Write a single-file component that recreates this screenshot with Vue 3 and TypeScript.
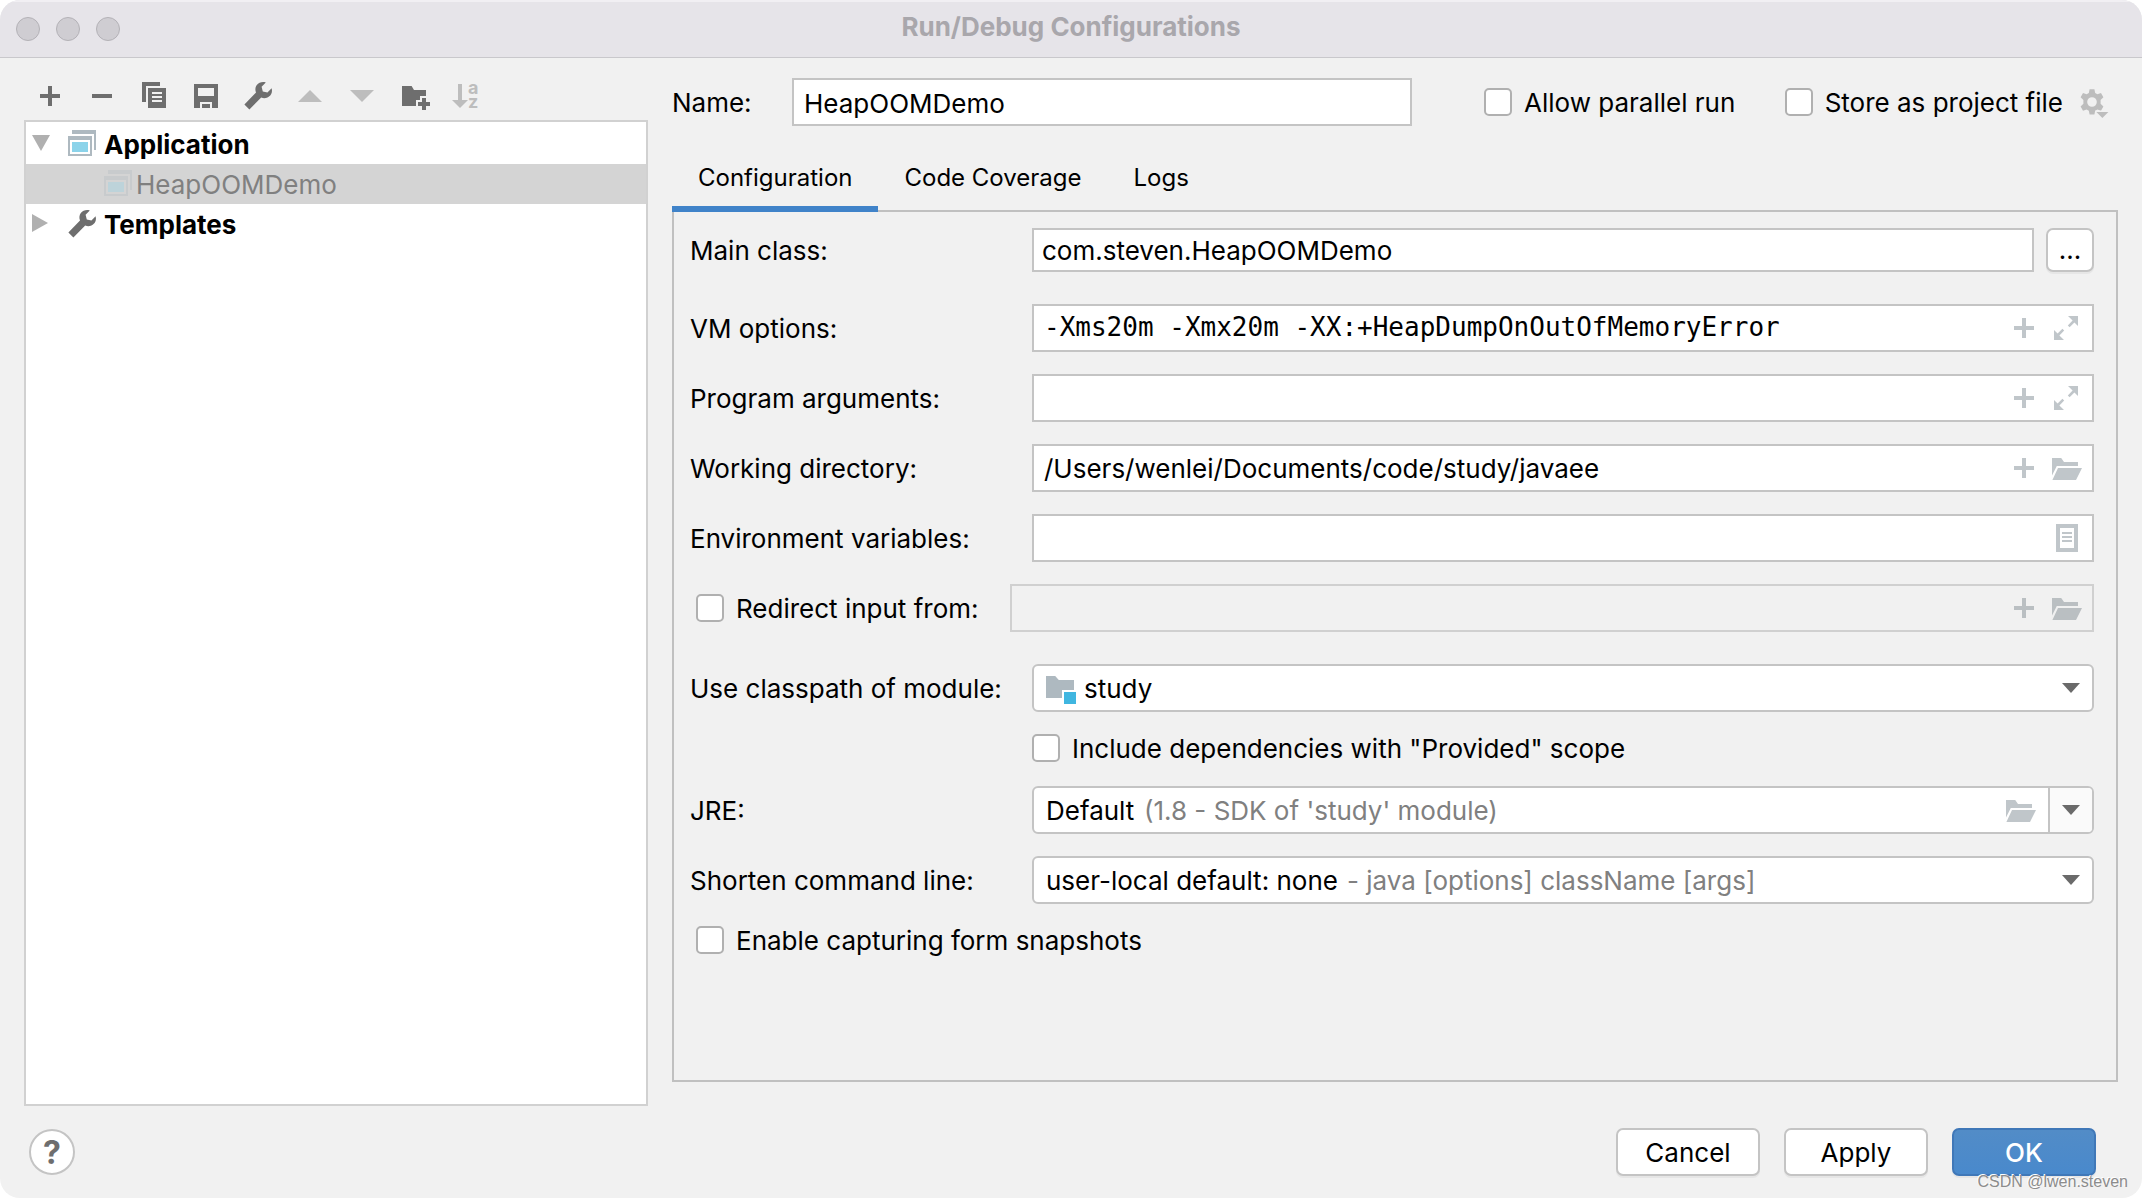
<script setup lang="ts">
import { reactive, ref } from 'vue'

interface Tool {
  name: string
  label: string
  disabled?: boolean
}

const tools: Tool[] = [
  { name: 'add', label: 'Add' },
  { name: 'remove', label: 'Remove' },
  { name: 'copy', label: 'Copy' },
  { name: 'save', label: 'Save' },
  { name: 'wrench', label: 'Edit templates' },
  { name: 'up', label: 'Move up', disabled: true },
  { name: 'down', label: 'Move down', disabled: true },
  { name: 'newFolder', label: 'Create folder' },
  { name: 'sort', label: 'Sort', disabled: true },
]

const icons: Record<string, string> = {
  add: 'M7 3h2v4h4v2H9v4H7V9H3V7h4z',
  remove: 'M3 7h10v2H3z',
  copy: 'M2 1h9v2H4v8H2zM5 4h9v10H5zM7 6v1h5V6zM7 8v1h5V8zM7 10v1h5v-1z',
  save: 'M2 2h12v12h-3v-3H5v3H2zM4 4v4h8V4zM6 12h4v2H6z',
  wrench:
    'M14.8 4.1 12.7 6.3 10.4 5.7 9.8 3.4 11.9 1.2C10.2.7 8.4 1.2 7.4 2.5 6.6 3.6 6.5 5 7 6.3L1.2 12.2l2.5 2.5 5.9-5.9c1.4.6 2.8.4 3.9-.5 1.3-1 1.8-2.6 1.3-4.2z',
  up: 'M2 11 8 5l6 6z',
  down: 'M2 5h12l-6 6z',
  newFolder: 'M2 3h4.8L8 5h6v3h-3v2H9v3H2zM12 9h2v2h2v2h-2v2h-2v-2h-2v-2h2z',
  sort: 'M4 2h2v8h3l-4 4-4-4h3z',
  expand: 'M9 2h5v5l-1.8-1.8-2.4 2.4-.9-.9 2.4-2.4zM2 9l1.800 1.800 2.400-2.400.9.9-2.400 2.400L7 14H2z',
  folder: 'M1 3h4.6L7 5h7v2H3.4L1 11.8zM4 8h12l-3 6H1.2z',
  list: 'M3 1h11v14H3zM5 3v10h7V3zM6 5h5v1H6zM6 7h5v1H6zM6 9h5v1H6z',
}

const tabs = ['Configuration', 'Code Coverage', 'Logs']
const activeTab = ref('Configuration')

const form = reactive({
  name: 'HeapOOMDemo',
  parallel: false,
  store: false,
  mainClass: 'com.steven.HeapOOMDemo',
  redirect: false,
  redirectFile: '',
  module: 'study',
  provided: false,
  jre: 'Default',
  shorten: 'user-local default: none',
  snapshots: false,
})

const fields = reactive([
  { id: 'vm', label: 'VM options:', value: '-Xms20m -Xmx20m -XX:+HeapDumpOnOutOfMemoryError', mono: true, icons: ['add', 'expand'] },
  { id: 'args', label: 'Program arguments:', value: '', mono: true, icons: ['add', 'expand'] },
  { id: 'cwd', label: 'Working directory:', value: '/Users/wenlei/Documents/code/study/javaee', mono: false, icons: ['add', 'folder'] },
  { id: 'env', label: 'Environment variables:', value: '', mono: false, icons: ['list'] },
])
</script>

<template>
  <div class="window">
    <header class="titlebar">
      <div class="lights"><i></i><i></i><i></i></div>
      <h1>Run/Debug Configurations</h1>
    </header>

    <main class="content">
      <aside class="side">
        <div class="toolbar">
          <button v-for="t in tools" :key="t.name" class="icon-btn" :aria-label="t.label" :disabled="t.disabled">
            <svg class="icon" viewBox="0 0 16 16">
              <path fill-rule="evenodd" :d="icons[t.name]" />
              <template v-if="t.name === 'sort'">
                <text x="9" y="7" class="sort-letter">a</text>
                <text x="9" y="14" class="sort-letter">z</text>
              </template>
            </svg>
          </button>
        </div>
        <ul class="tree">
          <li class="node">
            <svg class="twisty" viewBox="0 0 20 20"><path d="M0 1h18L9 17z" /></svg>
            <svg class="icon app" viewBox="0 0 16 16">
              <path fill-rule="evenodd" d="M3 1h12v10h-1V3H3zM1 4h12v10H1zM2 6v7h10V6z" />
              <path class="pane" d="M3 7h8v5H3z" />
            </svg>
            <b>Application</b>
          </li>
          <li class="node child selected">
            <svg class="icon app" viewBox="0 0 16 16">
              <path fill-rule="evenodd" d="M3 1h12v10h-1V3H3zM1 4h12v10H1zM2 6v7h10V6z" />
              <path class="pane" d="M3 7h8v5H3z" />
            </svg>
            <span>HeapOOMDemo</span>
          </li>
          <li class="node">
            <svg class="twisty" viewBox="0 0 20 20"><path d="M0 0l16 9-16 9z" /></svg>
            <svg class="icon" viewBox="0 0 16 16"><path :d="icons.wrench" /></svg>
            <b>Templates</b>
          </li>
        </ul>
      </aside>

      <section class="editor">
        <div class="name-row">
          <label for="name" class="name-label">Name:</label>
          <input id="name" v-model="form.name" class="box name-input" type="text" />
          <label class="check parallel"><input v-model="form.parallel" type="checkbox" /><span>Allow parallel run</span></label>
          <label class="check store"><input v-model="form.store" type="checkbox" /><span>Store as project file</span></label>
          <button class="icon-btn gear" aria-label="Storage settings" disabled>
            <svg class="icon" viewBox="0 0 16 16">
              <path
                fill-rule="evenodd"
                d="M5.8 1.6h2.4l.4 1.9 1.1.6 1.8-.6 1.2 2.1L11.3 7v1.9l1.4 1.4-1.2 2.1-1.8-.6-1.1.6-.4 1.9H5.800l-.4-1.900-1.100-.6-1.800.6-1.200-2.100L2.700 8.900V7L1.300 5.600l1.200-2.100 1.800.6 1.100-.6zM7 5.600a2.400 2.400 0 1 0 0 4.800 2.400 2.400 0 0 0 0-4.800z"
              />
              <path class="gear-gap" d="M8.400 12.400h7.600v4h-4.600z" />
              <path d="M9.200 13h6L12.200 16z" />
            </svg>
          </button>
        </div>

        <div class="tabs" role="tablist">
          <button
            v-for="t in tabs"
            :key="t"
            role="tab"
            class="tab"
            :class="{ active: t === activeTab }"
            :aria-selected="t === activeTab"
            @click="activeTab = t"
          >{{ t }}</button>
        </div>

        <form class="panel" @submit.prevent>
          <div class="row spaced">
            <label for="main" class="label">Main class:</label>
            <input id="main" v-model="form.mainClass" class="box main-class" type="text" />
            <button type="button" class="browse" aria-label="Browse main class">...</button>
          </div>

          <div v-for="f in fields" :key="f.id" class="row">
            <label :for="f.id" class="label">{{ f.label }}</label>
            <div class="box field">
              <input :id="f.id" v-model="f.value" type="text" :class="{ mono: f.mono }" />
              <button v-for="i in f.icons" :key="i" type="button" class="icon-btn inner" :aria-label="i">
                <svg class="icon" viewBox="0 0 16 16"><path :fill-rule="i === 'list' ? 'evenodd' : 'nonzero'" :d="icons[i]" /></svg>
              </button>
            </div>
          </div>

          <div class="row spaced">
            <label class="check indent redirect"><input v-model="form.redirect" type="checkbox" /><span>Redirect input from:</span></label>
            <div class="box field off">
              <input v-model="form.redirectFile" type="text" aria-label="Redirect input file" disabled />
              <button v-for="i in ['add', 'folder']" :key="i" type="button" class="icon-btn inner" :aria-label="i" disabled>
                <svg class="icon" viewBox="0 0 16 16"><path :d="icons[i]" /></svg>
              </button>
            </div>
          </div>

          <div class="row">
            <label for="module" class="label">Use classpath of module:</label>
            <div class="box combo">
              <svg class="icon module" viewBox="0 0 16 16">
                <path d="M1 2h4.600L7.400 4H15v5H9v4H1z" />
                <path class="badge" d="M10 10h6v6h-6z" />
              </svg>
              <select id="module" v-model="form.module" class="grow"><option>study</option></select>
              <svg class="arrow" viewBox="0 0 18 10"><path d="M0 0h18L9 10z" /></svg>
            </div>
          </div>

          <div class="row provided">
            <label class="check"><input v-model="form.provided" type="checkbox" /><span>Include dependencies with "Provided" scope</span></label>
          </div>

          <div class="row">
            <label for="jre" class="label">JRE:</label>
            <div class="box combo">
              <select id="jre" v-model="form.jre"><option>Default</option></select>
              <span class="hint">(1.8 - SDK of 'study' module)</span>
              <button type="button" class="icon-btn inner" aria-label="Browse JRE">
                <svg class="icon" viewBox="0 0 16 16"><path :d="icons.folder" /></svg>
              </button>
              <button type="button" class="drop" aria-label="Choose JRE">
                <svg class="arrow" viewBox="0 0 18 10"><path d="M0 0h18L9 10z" /></svg>
              </button>
            </div>
          </div>

          <div class="row">
            <label for="shorten" class="label">Shorten command line:</label>
            <div class="box combo">
              <select id="shorten" v-model="form.shorten"><option>user-local default: none</option></select>
              <span class="hint">- java [options] className [args]</span>
              <svg class="arrow" viewBox="0 0 18 10"><path d="M0 0h18L9 10z" /></svg>
            </div>
          </div>

          <label class="check indent"><input v-model="form.snapshots" type="checkbox" /><span>Enable capturing form snapshots</span></label>
        </form>
      </section>
    </main>

    <footer class="footer">
      <button class="help" aria-label="Help">?</button>
      <div class="actions">
        <button class="btn">Cancel</button>
        <button class="btn">Apply</button>
        <button class="btn primary">OK</button>
      </div>
      <span class="credit">CSDN @lwen.steven</span>
    </footer>
  </div>
</template>

<style>
body {
  background: #fff;
}
</style>

<style scoped>
* {
  box-sizing: border-box;
}
.window {
  display: flex;
  flex-direction: column;
  min-height: 100vh;
  overflow: hidden;
  border-radius: 20px;
  background: #f1f1f1;
  color: #000;
  font: 26px/32px Inter, "Open Sans", sans-serif;
}
button,
input,
select {
  margin: 0;
  padding: 0;
  border: 0;
  background: none;
  color: inherit;
  font: inherit;
}
.titlebar {
  position: relative;
  display: flex;
  align-items: center;
  justify-content: center;
  height: 58px;
  border-bottom: 1px solid #c9c8cc;
  box-shadow: inset 0 2px #f1eff3;
  background: #e6e4e9;
}
.lights {
  position: absolute;
  left: 16px;
  display: flex;
  gap: 16px;
}
.lights i {
  width: 24px;
  height: 24px;
  border: 1px solid #b3b1b6;
  border-radius: 50%;
  background: #cfcdd2;
}
h1 {
  margin: 0;
  padding-bottom: 3px;
  color: #a9a7ac;
  font-size: 26px;
  font-weight: 700;
}
.content {
  display: flex;
  flex: 1;
  gap: 24px;
  padding: 20px 24px 0;
}
.side {
  display: flex;
  flex: 0 0 624px;
  flex-direction: column;
}
.toolbar {
  display: flex;
  gap: 20px;
  padding: 2px 10px 8px;
}
.icon-btn {
  display: block;
  flex: none;
  width: 32px;
  height: 32px;
}
.icon {
  display: block;
  flex: none;
  width: 32px;
  height: 32px;
  overflow: visible;
  fill: #6e6e6e;
}
.icon-btn:disabled .icon {
  fill: #bdbdbd;
}
.sort-letter {
  font-size: 9px;
  font-weight: 700;
  line-height: 1;
}
.tree {
  flex: 1;
  margin: 0;
  padding: 2px 0;
  border: 2px solid #d1d1d1;
  background: #fff;
  list-style: none;
}
.node {
  display: flex;
  align-items: center;
  height: 40px;
  padding-left: 6px;
}
.node .icon {
  margin-right: 6px;
}
.node.child {
  padding-left: 76px;
}
.node.child .icon {
  margin-right: 2px;
  opacity: 0.3;
}
.node.selected {
  background: #d4d4d4;
  color: #808080;
}
.node b {
  font-weight: 700;
}
.node b,
.node span,
.label,
.name-label,
.check span,
.hint {
  padding-top: 2px;
}
.twisty {
  width: 20px;
  height: 20px;
  margin-right: 14px;
  fill: #b0b0b0;
}
.icon.app {
  fill: #aeb9c0;
}
.pane {
  fill: #8bd3ea;
}
.editor {
  display: flex;
  flex: 1;
  flex-direction: column;
  min-width: 0;
  margin-bottom: 24px;
}
.name-row {
  display: flex;
  align-items: center;
  padding-right: 8px;
  white-space: nowrap;
}
.name-label {
  width: 120px;
}
.box {
  min-width: 0;
  height: 48px;
  border: 2px solid #c4c4c4;
  background: #fff;
}
.name-input {
  flex: 0 1 620px;
  padding: 2px 10px 0;
}
.check {
  display: flex;
  align-items: center;
  height: 28px;
  white-space: nowrap;
}
.check input {
  flex: none;
  width: 28px;
  height: 28px;
  margin-right: 12px;
  border: 2px solid #b0b0b0;
  border-radius: 5px;
  background: #fff;
  appearance: none;
}
.check input:checked {
  background: #4a88c7;
}
.check.indent {
  padding-left: 6px;
}
.parallel {
  margin-left: 72px;
}
.store {
  margin-left: auto;
}
.gear {
  margin-left: 15px;
}
.icon .gear-gap {
  fill: #f1f1f1;
}
.tabs {
  position: relative;
  z-index: 1;
  display: flex;
  margin-top: 18px;
}
.tab {
  height: 68px;
  padding: 0 26px;
  font-size: 24px;
}
.tab.active {
  box-shadow: inset 0 -6px #4083c9;
}
.panel {
  display: flex;
  flex: 1;
  flex-direction: column;
  gap: 22px;
  margin-top: -2px;
  padding: 16px 22px 16px 16px;
  border: 2px solid #c0c0c0;
}
.row {
  display: flex;
  align-items: center;
}
.spaced {
  margin-bottom: 10px;
}
.label {
  flex: 0 0 342px;
  white-space: nowrap;
}
.main-class {
  flex: 1;
  height: 44px;
  padding: 0 8px;
}
.browse {
  width: 48px;
  height: 44px;
  margin-left: 12px;
  border: 2px solid #c4c4c4;
  border-radius: 7px;
  box-shadow: 0 2px #e6e6e6;
  background: #fff;
}
.field,
.combo {
  display: flex;
  flex: 1;
  align-items: center;
  padding: 0 10px;
}
.field input {
  flex: 1;
  min-width: 0;
  height: 44px;
}
.field .mono {
  padding-bottom: 2px;
  font-family: "DejaVu Sans Mono", monospace;
}
.inner {
  margin-left: 10px;
}
.inner .icon {
  fill: #c0c6ca;
}
.off {
  border-color: #d0d0d0;
  background: #f1f1f1;
}
.off .icon-btn .icon {
  fill: #babfc2;
}
.redirect {
  flex: 0 0 320px;
}
.combo {
  padding: 0 12px;
  border-radius: 6px;
}
.combo select {
  height: 44px;
  padding-top: 2px;
  appearance: none;
}
.combo .grow {
  flex: 1;
}
.module {
  margin: 0 8px 0 -2px;
}
.icon.module {
  fill: #aeb9c0;
}
.icon .badge {
  fill: #40b6e0;
}
.arrow {
  display: block;
  flex: none;
  width: 18px;
  height: 10px;
  fill: #6a6a6a;
}
.hint {
  flex: 1;
  margin-left: 9px;
  color: #808080;
  white-space: nowrap;
}
.drop {
  display: flex;
  align-items: center;
  justify-content: center;
  width: 44px;
  height: 44px;
  margin: 0 -12px 0 12px;
  border-left: 2px solid #c4c4c4;
  border-radius: 0 4px 4px 0;
  background: #fafafa;
}
.provided {
  margin-bottom: 2px;
  padding-left: 342px;
}
.footer {
  position: relative;
  display: flex;
  align-items: center;
  justify-content: space-between;
  padding: 22px 46px 22px 29px;
}
.help {
  width: 46px;
  height: 46px;
  padding-top: 2px;
  border: 2px solid #c4c4c4;
  border-radius: 50%;
  background: #fff;
  color: #6e6e6e;
  font-size: 32px;
  font-weight: 700;
}
.actions {
  display: flex;
  gap: 24px;
}
.btn {
  width: 144px;
  height: 48px;
  padding-top: 2px;
  border: 2px solid #c4c4c4;
  border-radius: 7px;
  box-shadow: 0 2px #e6e6e6;
  background: #fff;
}
.btn.primary {
  border-color: #4078b8;
  background: linear-gradient(#528cc7, #4989cc);
  color: #fff;
  font-weight: 500;
}
.credit {
  position: absolute;
  right: 14px;
  bottom: 6px;
  color: #8c8c8c;
  font: 16px/20px "Liberation Sans", Arial, sans-serif;
  text-shadow: -1px -1px #fff;
}
</style>
